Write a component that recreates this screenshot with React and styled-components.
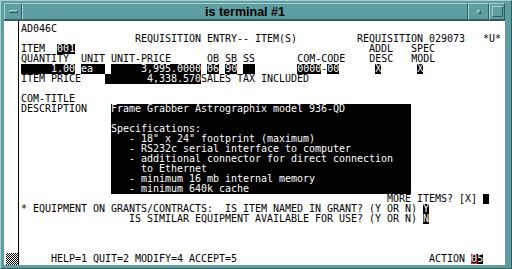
import styled, { createGlobalStyle } from "styled-components";

const TEAL = "#5f9ea0";
const LIGHT = "#a6d2d2";
const DARK = "#2e5e5e";

const GlobalStyle = createGlobalStyle`
  html, body {
    margin: 0;
    padding: 0;
    background: ${TEAL};
  }
`;

const Frame = styled.div`
  width: 512px;
  height: 269px;
  box-sizing: border-box;
  display: flex;
  flex-direction: column;
  background: ${TEAL};
  border-top: 1px solid ${LIGHT};
  border-left: 1px solid ${LIGHT};
  border-right: 1px solid ${DARK};
  border-bottom: 1px solid ${DARK};
  padding: 2px 6px 3px 3px;
`;

const TitleBar = styled.div`
  display: flex;
  height: 17px;
  flex-shrink: 0;
`;

const Bevel = styled.div`
  box-sizing: border-box;
  border-top: 1px solid ${LIGHT};
  border-left: 1px solid ${LIGHT};
  border-right: 1px solid ${DARK};
  border-bottom: 1px solid ${DARK};
  background: ${TEAL};
  display: flex;
  align-items: center;
  justify-content: center;
`;

const MenuButton = styled(Bevel)`
  width: 18px;
`;

const MenuBar = styled.div`
  width: 9px;
  height: 3px;
  box-sizing: border-box;
  border-top: 1px solid ${LIGHT};
  border-left: 1px solid ${LIGHT};
  border-right: 1px solid ${DARK};
  border-bottom: 1px solid ${DARK};
`;

const Title = styled(Bevel)`
  flex: 1;
  font-family: "Liberation Sans", Arial, sans-serif;
  font-weight: bold;
  font-size: 12.5px;
  color: #000;
`;

const MinButton = styled(Bevel)`
  width: 21px;
`;

const MinDot = styled.div`
  width: 4px;
  height: 4px;
  box-sizing: border-box;
  border-top: 1px solid ${LIGHT};
  border-left: 1px solid ${LIGHT};
  border-right: 1px solid ${DARK};
  border-bottom: 1px solid ${DARK};
`;

const MaxButton = styled(Bevel)`
  width: 16px;
`;

const MaxBox = styled.div`
  width: 11px;
  height: 11px;
  box-sizing: border-box;
  border-top: 1px solid ${LIGHT};
  border-left: 1px solid ${LIGHT};
  border-right: 1px solid ${DARK};
  border-bottom: 1px solid ${DARK};
`;

const Body = styled.div`
  flex: 1;
  display: flex;
  flex-direction: row;
  background: #fff;
  border-top: 1px solid ${DARK};
  min-height: 0;
`;

const ScrollBar = styled.div`
  flex: 0 0 14px;
  display: flex;
  flex-direction: column;
  justify-content: flex-end;
  padding: 0 0 0 2px;
  box-sizing: border-box;
`;

const Thumb = styled.div`
  width: 12px;
  height: 12px;
  background-color: #808080;
  background-image: repeating-conic-gradient(#000 0% 25%, #fff 0% 50%);
  background-size: 2px 2px;
`;

const Divider = styled.div`
  flex: 0 0 1px;
  background: #000;
`;

const Screen = styled.div`
  flex: 1;
  padding: 3px 0 0 2px;
  font-family: "DejaVu Sans Mono", "Liberation Mono", monospace;
  font-size: 10px;
  letter-spacing: -0.02px;
  line-height: 10px;
  color: #000;
`;

const Line = styled.div`
  display: flex;
  height: 10px;
`;

const Cell = styled.span`
  display: block;
  height: 10px;
  white-space: pre;
  background: ${(p) => (p.$inv ? "#000" : "transparent")};
  color: ${(p) => (p.$inv ? "#fff" : "#000")};
  box-shadow: ${(p) => (p.$cursor ? "inset 0 0 0 1px #e02020" : "none")};
`;

const box = (t) => t.padEnd(50, " ");

const screen = [
  [[0, "AD046C"]],
  [[19, "REQUISITION ENTRY-- ITEM(S)"], [56, "REQUISITION 029073"], [77, "*U*"]],
  [[0, "ITEM"], [6, "001", "inv"], [58, "ADDL"], [65, "SPEC"]],
  [[0, "QUANTITY"], [10, "UNIT"], [15, "UNIT-PRICE"], [31, "OB SB SS"], [46, "COM-CODE"], [58, "DESC"], [65, "MODL"]],
  [
    [0, "     1.00", "inv"], [10, "ea  ", "inv"], [15, "     3,995.0000", "inv"],
    [31, "06", "inv"], [34, "90", "inv"], [37, "  ", "inv"],
    [46, "0000", "inv"], [50, "-"], [51, "00", "inv"], [59, "X", "inv"], [66, "X", "inv"],
  ],
  [[0, "ITEM PRICE"], [14, "       4,338.570", "inv"], [30, "SALES TAX INCLUDED"]],
  [],
  [[0, "COM-TITLE"]],
  [[0, "DESCRIPTION"], [15, box("Frame Grabber Astrographix model 936-QD"), "inv"]],
  [[15, box(""), "inv"]],
  [[15, box("Specifications:"), "inv"]],
  [[15, box('   - 18" x 24" footprint (maximum)'), "inv"]],
  [[15, box("   - RS232c serial interface to computer"), "inv"]],
  [[15, box("   - additional connector for direct connection"), "inv"]],
  [[15, box("     to Ethernet"), "inv"]],
  [[15, box("   - minimum 16 mb internal memory"), "inv"]],
  [[15, box("   - minimum 640k cache"), "inv"]],
  [[61, "MORE ITEMS? [X]"], [77, " ", "inv"]],
  [[0, "* EQUIPMENT ON GRANTS/CONTRACTS:  IS ITEM NAMED IN GRANT? (Y OR N)"], [67, "Y", "inv"]],
  [[18, "IS SIMILAR EQUIPMENT AVAILABLE FOR USE? (Y OR N)"], [67, "N", "inv"]],
  [],
  [],
  [],
  [[5, "HELP=1 QUIT=2 MODIFY=4 ACCEPT=5"], [68, "ACTION"], [75, "0", "cursor"], [76, "5", "inv"]],
];

function TermLine({ parts }) {
  let col = 0;
  const out = [];
  parts.forEach(([at, text, kind], i) => {
    if (at > col) out.push(<Cell key={`g${i}`}>{" ".repeat(at - col)}</Cell>);
    out.push(
      <Cell key={i} $inv={!!kind} $cursor={kind === "cursor"}>
        {text}
      </Cell>
    );
    col = at + text.length;
  });
  return <Line>{out}</Line>;
}

export default function App() {
  return (
    <>
      <GlobalStyle />
      <Frame>
        <TitleBar>
          <MenuButton>
            <MenuBar />
          </MenuButton>
          <Title>is terminal #1</Title>
          <MinButton>
            <MinDot />
          </MinButton>
          <MaxButton>
            <MaxBox />
          </MaxButton>
        </TitleBar>
        <Body>
          <ScrollBar>
            <Thumb />
          </ScrollBar>
          <Divider />
          <Screen>
            {screen.map((parts, i) => (
              <TermLine key={i} parts={parts} />
            ))}
          </Screen>
        </Body>
      </Frame>
    </>
  );
}
